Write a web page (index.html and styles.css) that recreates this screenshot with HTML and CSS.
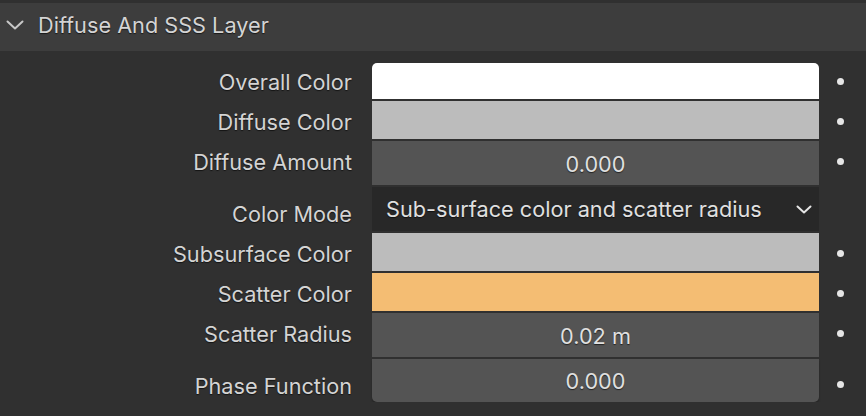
FILE: index.html
```html
<!DOCTYPE html>
<html lang="en">
<head>
  <meta charset="UTF-8" />
  <title>Diffuse And SSS Layer</title>
  <link rel="stylesheet" href="styles.css">
</head>
<body>
  <header class="panel-header">
    <svg class="chevron" width="18" height="10" viewBox="0 0 18 10">
      <path d="M1.5 1.5 L9 8.5 L16.5 1.5" fill="none" stroke="#c8c8c8" stroke-width="2" stroke-linecap="round" stroke-linejoin="round"/>
    </svg>
    <h1>Diffuse And SSS Layer</h1>
  </header>

  <div class="props">
    <div class="row h36">
      <label>Overall Color</label>
      <div class="field swatch white first"></div>
      <span class="dot-cell"><i class="dot"></i></span>
    </div>
    <div class="row h38 down1">
      <label>Diffuse Color</label>
      <div class="field swatch grey"></div>
      <span class="dot-cell"><i class="dot"></i></span>
    </div>
    <div class="row h44 up2">
      <label>Diffuse Amount</label>
      <div class="field number">0.000</div>
      <span class="dot-cell"><i class="dot"></i></span>
    </div>
    <div class="row h44 down4">
      <label>Color Mode</label>
      <div class="field select">
        <span>Sub-surface color and scatter radius</span>
        <svg width="16" height="9" viewBox="0 0 16 9">
          <path d="M1.5 1.5 L8 7.5 L14.5 1.5" fill="none" stroke="#e6e6e6" stroke-width="2" stroke-linecap="round" stroke-linejoin="round"/>
        </svg>
      </div>
      <span class="dot-cell"></span>
    </div>
    <div class="row h38 down1">
      <label>Subsurface Color</label>
      <div class="field swatch grey"></div>
      <span class="dot-cell"><i class="dot"></i></span>
    </div>
    <div class="row h38 down1">
      <label>Scatter Color</label>
      <div class="field swatch orange"></div>
      <span class="dot-cell"><i class="dot"></i></span>
    </div>
    <div class="row h44 up2">
      <label>Scatter Radius</label>
      <div class="field number">0.02 m</div>
      <span class="dot-cell"><i class="dot"></i></span>
    </div>
    <div class="row h43 down4">
      <label>Phase Function</label>
      <div class="field number last">0.000</div>
      <span class="dot-cell"><i class="dot"></i></span>
    </div>
  </div>
</body>
</html>
```

FILE: styles.css
```css
body {
  font-family: Inter, "Noto Sans", sans-serif;
  background-color: #303030;
  margin: 0;
  padding-top: 3px;
  color: #d4d4d4;
  font-size: 21.7px;
}

.panel-header {
  display: flex;
  align-items: center;
  height: 48px;
  box-sizing: border-box;
  background-color: #3d3d3d;
  padding: 0 0 5px 6px;
}

.chevron {
  margin-right: 14px;
}

.panel-header h1 {
  margin: 0;
  font-size: 21.7px;
  font-weight: 400;
  color: #d4d4d4;
  text-shadow: 0 1px 1px rgba(0, 0, 0, 0.6);
}

.props {
  display: flex;
  flex-direction: column;
  gap: 2px;
  padding-top: 12px;
}

.row {
  display: grid;
  grid-template-columns: 372px 447px 47px;
}

.row.h36 { height: 36px; }
.row.h38 { height: 38px; }
.row.h43 { height: 43px; }
.row.h44 { height: 44px; }

.row label,
.dot-cell {
  display: flex;
  align-items: center;
  box-sizing: border-box;
}

.row label {
  justify-content: flex-end;
  padding-top: 2px;
  padding-right: 20px;
  text-shadow: 0 1px 1px rgba(0, 0, 0, 0.6);
  white-space: nowrap;
}

.row.down1 label { padding-top: 4px; }
.row.down1 .dot-cell { padding-top: 2px; }

.row.down4 label { padding-top: 10px; }
.row.down4 .dot-cell { padding-top: 8px; }

.row.up2 label { padding-top: 0; padding-bottom: 2px; }
.row.up2 .dot-cell { padding-bottom: 4px; }

.dot-cell {
  padding-left: 18px;
}

.dot {
  display: block;
  width: 7px;
  height: 7px;
  border-radius: 50%;
  background-color: #e6e6e6;
}

.field {
  box-sizing: border-box;
}

.field.first {
  border-radius: 5px 5px 0 0;
}

.field.last {
  border-radius: 0 0 5px 5px;
  box-shadow: 0 2px 2px rgba(0, 0, 0, 0.25);
}

.swatch.white { background-color: #ffffff; }
.swatch.grey { background-color: #bcbcbc; }
.swatch.orange { background-color: #f4bd73; }

.number {
  display: flex;
  align-items: center;
  justify-content: center;
  padding-top: 1px;
  background-color: #545454;
  color: #e0e0e0;
  text-shadow: 0 1px 1px rgba(0, 0, 0, 0.6);
}

.select {
  display: flex;
  align-items: center;
  justify-content: space-between;
  background-color: #282828;
  color: #e0e0e0;
  padding: 0 7px 0 14px;
  text-shadow: 0 1px 1px rgba(0, 0, 0, 0.6);
}
```
